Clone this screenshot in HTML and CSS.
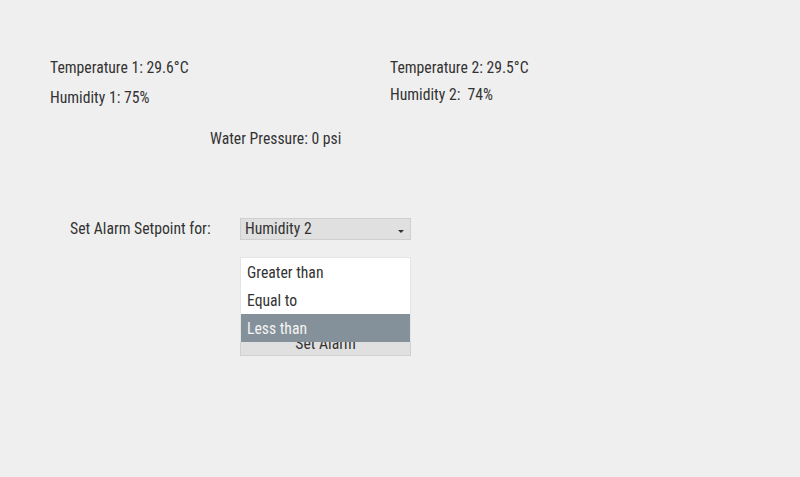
FILE: index.html
```html
<!DOCTYPE html>
<html lang="en">
<head>
    <meta charset="UTF-8">
    <meta name="viewport" content="width=device-width, initial-scale=1.0">
    <title>Sensor Monitor</title>
    <link rel="stylesheet" href="styles.css">
</head>
<body>
    <div class="panel">
        <div class="readings">
            <div class="col">
                <p class="reading first">Temperature 1: 29.6°C</p>
                <p class="reading">Humidity 1: 75%</p>
            </div>
            <div class="col right">
                <p class="reading first">Temperature 2: 29.5°C</p>
                <p class="reading tight">Humidity 2:&nbsp; 74%</p>
            </div>
        </div>
        <p class="pressure">Water Pressure: 0 psi</p>

        <div class="alarm">
            <span class="alarm-label">Set Alarm Setpoint for:</span>
            <div class="controls">
                <div class="select">
                    <span>Humidity 2</span>
                    <span class="caret"></span>
                </div>
                <div class="stack">
                    <button class="set-btn">Set Alarm</button>
                    <ul class="menu">
                        <li>Greater than</li>
                        <li>Equal to</li>
                        <li class="active">Less than</li>
                    </ul>
                </div>
            </div>
        </div>
    </div>
</body>
</html>
```

FILE: styles.css
```css
html, body {
    margin: 0;
    padding: 0;
    background-color: #efefef;
}
body {
    font-family: "Roboto Condensed", "Roboto", sans-serif;
    font-stretch: condensed;
    font-size: 15.7px;
    color: #333;
}
.panel {
    width: 800px;
    height: 477px;
    padding: 58px 0 0 50px;
    box-sizing: border-box;
}
.readings {
    display: flex;
}
.col {
    width: 340px;
}
.reading {
    margin: 0;
    height: 20px;
    line-height: 20px;
}
.reading + .reading {
    margin-top: 10px;
}
.col.right .reading + .reading {
    margin-top: 7px;
}
.pressure {
    margin: 21px 0 0 160px;
    height: 20px;
    line-height: 20px;
}
.alarm {
    display: flex;
    margin: 69px 0 0 20px;
}
.alarm-label {
    width: 170px;
    line-height: 21px;
}
.controls {
    width: 171px;
}
.select {
    height: 20px;
    border: 1px solid #cfcfcf;
    background-color: #e0e0e0;
    display: flex;
    align-items: center;
    justify-content: space-between;
    padding: 0 4px;
    line-height: 20px;
}
.caret {
    width: 0;
    height: 0;
    border-left: 3px solid transparent;
    border-right: 3px solid transparent;
    border-top: 3px solid #333;
    margin: 4px 2px 0 0;
}
.stack {
    position: relative;
    margin-top: 17px;
    height: 99px;
}
.set-btn {
    position: absolute;
    left: 0;
    top: 74px;
    width: 171px;
    height: 25px;
    border: 1px solid #d0d0d0;
    background-color: #e0e0e0;
    font: inherit;
    color: #333;
    padding: 0;
}
.menu {
    position: absolute;
    left: 0;
    top: 0;
    width: 169px;
    margin: 0;
    padding: 0;
    list-style: none;
    background-color: #fff;
    border: 1px solid #e4e4e4;
    border-bottom: none;
}
.menu li {
    height: 28px;
    line-height: 30px;
    padding-left: 6px;
}
.menu li.active {
    background-color: #85919a;
    color: #f4f4f4;
}
```
